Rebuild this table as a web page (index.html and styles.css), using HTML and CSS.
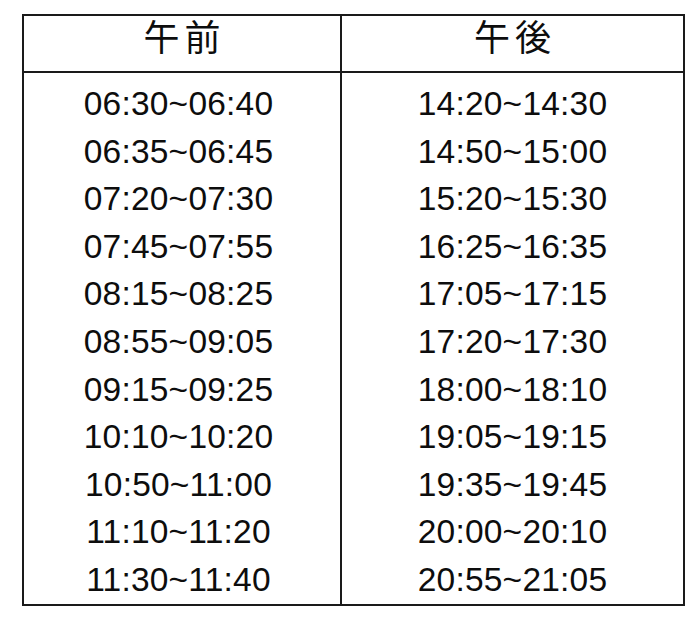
FILE: index.html
```html
<!DOCTYPE html>
<html lang="ja">
<head>
<meta charset="utf-8">
<title>時刻表</title>
<link rel="stylesheet" href="styles.css">
</head>
<body>
<div class="timetable">
  <div class="head head-left">午前</div>
  <div class="head">午後</div>
  <div class="col col-left">
    <div class="row">06:30~06:40</div>
    <div class="row">06:35~06:45</div>
    <div class="row">07:20~07:30</div>
    <div class="row">07:45~07:55</div>
    <div class="row">08:15~08:25</div>
    <div class="row">08:55~09:05</div>
    <div class="row">09:15~09:25</div>
    <div class="row">10:10~10:20</div>
    <div class="row">10:50~11:00</div>
    <div class="row">11:10~11:20</div>
    <div class="row">11:30~11:40</div>
  </div>
  <div class="col">
    <div class="row">14:20~14:30</div>
    <div class="row">14:50~15:00</div>
    <div class="row">15:20~15:30</div>
    <div class="row">16:25~16:35</div>
    <div class="row">17:05~17:15</div>
    <div class="row">17:20~17:30</div>
    <div class="row">18:00~18:10</div>
    <div class="row">19:05~19:15</div>
    <div class="row">19:35~19:45</div>
    <div class="row">20:00~20:10</div>
    <div class="row">20:55~21:05</div>
  </div>
</div>
</body>
</html>
```
FILE: styles.css
```css
html, body {
  margin: 0;
  padding: 0;
  background: #ffffff;
}

.timetable {
  margin: 14px 0 0 22px;
  width: 663px;
  height: 592px;
  box-sizing: border-box;
  border: 2px solid #1a1a1a;
  display: grid;
  grid-template-columns: 318px 341px;
  grid-template-rows: 57px 1fr;
  color: #0d0d0d;
}

.head {
  box-sizing: border-box;
  height: 57px;
  border-bottom: 2px solid #1a1a1a;
  font-family: "Noto Sans CJK JP", "Liberation Sans", sans-serif;
  font-size: 36px;
  letter-spacing: 5px;
  text-indent: 5px;
  line-height: 38px;
  text-align: center;
}

.head-left {
  border-right: 2px solid #1a1a1a;
}

.col {
  padding-top: 7px;
  font-family: "Liberation Sans", Arial, sans-serif;
  font-size: 33.5px;
  letter-spacing: 0.2px;
  text-align: center;
}

.col-left {
  border-right: 2px solid #1a1a1a;
  padding-right: 7px;
}

.row {
  height: 47.6px;
  line-height: 47.6px;
}
```
